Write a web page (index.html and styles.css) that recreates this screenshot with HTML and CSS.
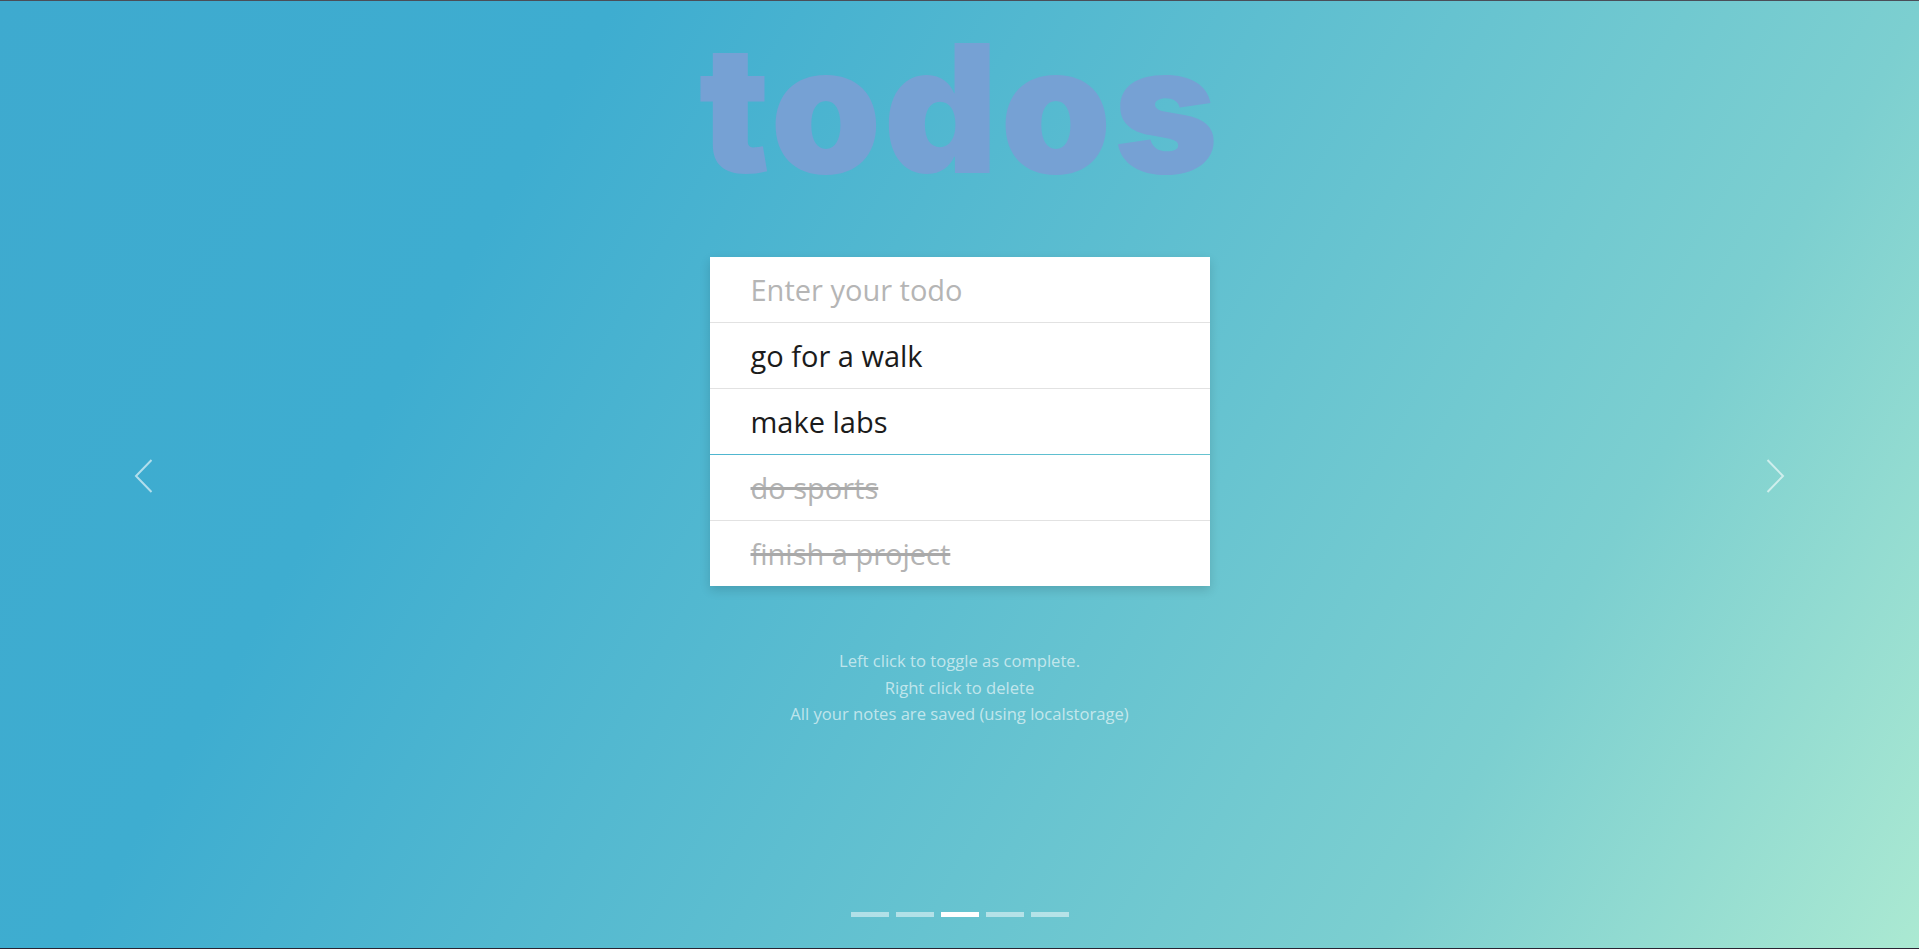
FILE: index.html
```html
<!DOCTYPE html>
<html lang="en">
<head>
<meta charset="utf-8">
<title>todos</title>
<link rel="stylesheet" href="styles.css">
</head>
<body>
<div class="page">
  <h1 class="title">todos</h1>
  <div class="card">
    <ul class="list">
      <li class="item placeholder">Enter your todo</li>
      <li class="item">go for a walk</li>
      <li class="item">make labs</li>
    </ul>
    <ul class="list">
      <li class="item done">do sports</li>
      <li class="item done">finish a project</li>
    </ul>
  </div>
  <p class="help">Left click to toggle as complete.<br>Right click to delete<br>All your notes are saved (using localstorage)</p>

  <button class="nav prev" aria-label="Previous">
    <svg width="20" height="36" viewBox="0 0 20 36"><path d="M17.5 2 L2 18 L17.5 34" fill="none" stroke="currentColor" stroke-width="2"/></svg>
  </button>
  <button class="nav next" aria-label="Next">
    <svg width="20" height="36" viewBox="0 0 20 36"><path d="M2.5 2 L18 18 L2.5 34" fill="none" stroke="currentColor" stroke-width="2"/></svg>
  </button>

  <div class="dots">
    <span class="dot"></span>
    <span class="dot"></span>
    <span class="dot active"></span>
    <span class="dot"></span>
    <span class="dot"></span>
  </div>
</div>
</body>
</html>
```

FILE: styles.css
```css
html, body {
  margin: 0;
  padding: 0;
  height: 100%;
}
body {
  box-sizing: border-box;
  border-top: 1px solid #4a4e58;
  border-bottom: 1px solid #2a2433;
  background: linear-gradient(120deg, #3eaacf 0%, #3eadd0 25%, #7ccfd0 78%, #abe9d2 100%);
  font-family: "Open Sans", "Noto Sans", sans-serif;
  overflow: hidden;
}
.page {
  position: relative;
  height: 100%;
  display: flex;
  flex-direction: column;
  align-items: center;
}
.title {
  margin: 0;
  padding: 0 8px;
  font-family: Inter, "Liberation Sans", sans-serif;
  font-weight: 900;
  font-size: 178px;
  line-height: normal;
  letter-spacing: 2px;
  color: #76a1d4;
}
.card {
  margin-top: 41px;
  width: 500px;
  display: flex;
  flex-direction: column;
  gap: 1px;
  box-shadow: 0 4px 10px rgba(0, 0, 0, 0.14);
}
.list {
  list-style: none;
  margin: 0;
  padding: 0;
  background: #fff;
}
.item {
  height: 65px;
  padding: 0 0 0 41px;
  display: flex;
  align-items: center;
  font-size: 29px;
  color: #1b1b1b;
  border-top: 1px solid #e2e2e2;
}
.item:first-child {
  border-top: 0;
}
.placeholder {
  color: #b5b5b5;
}
.done {
  color: #b3b3b3;
  text-decoration: line-through;
  text-decoration-color: #a9a9a9;
  text-decoration-thickness: 3px;
}
.help {
  margin: 62px 0 0;
  text-align: center;
  font-size: 16.6px;
  line-height: 26.5px;
  color: rgba(255, 255, 255, 0.62);
}
.nav {
  position: absolute;
  top: 457px;
  width: 20px;
  height: 36px;
  padding: 0;
  border: 0;
  background: none;
  color: rgba(255, 255, 255, 0.6);
}
.nav svg { display: block; }
.prev { left: 134px; }
.next { left: 1765px; }
.dots {
  position: absolute;
  bottom: 31px;
  left: 0;
  right: 0;
  display: flex;
  justify-content: center;
  gap: 7px;
}
.dot {
  width: 38px;
  height: 5px;
  background: rgba(255, 255, 255, 0.5);
}
.dot.active {
  background: #fff;
}
```
